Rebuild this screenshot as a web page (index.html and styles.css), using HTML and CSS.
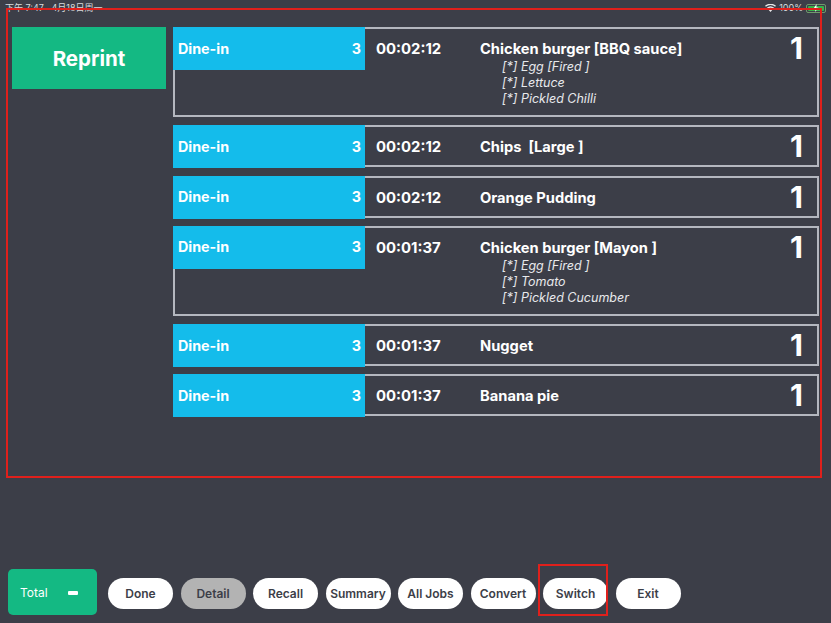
FILE: index.html
```html
<!DOCTYPE html>
<html lang="en">
<head>
<meta charset="utf-8">
<title>Kitchen display</title>
<link rel="stylesheet" href="styles.css">
</head>
<body>
<div class="page">
  <header class="status">
    <span class="status-time">下午 7:47&nbsp;&nbsp;&nbsp;4月18日周一</span>
    <span class="status-right">
      <svg class="wifi" width="11" height="8" viewBox="0 0 11 8"><path d="M5.5 8 3.8 6a2.6 2.6 0 0 1 3.4 0zM2.8 4.9l-1-1.1a5.6 5.6 0 0 1 7.4 0l-1 1.1a4.2 4.2 0 0 0-5.4 0zM.9 2.8 0 1.8a8.2 8.2 0 0 1 11 0l-.9 1a6.9 6.9 0 0 0-9.2 0z" fill="#e8e8ea"/></svg>
      <span>100%</span>
      <span class="battery"><span class="battery-fill"><svg class="bolt" width="6" height="8" viewBox="0 0 6 8"><path d="M3.6 0 .6 4.4h2L2.2 8l3.2-4.6h-2z" fill="#fff"/></svg></span></span>
    </span>
  </header>
  <main class="main">
    <aside class="side"><button class="reprint">Reprint</button></aside>
    <section class="list">
      <article class="card card-tall">
        <div class="tag"><span>Dine-in</span><span class="tag-n">3</span></div>
        <div class="time">00:02:12</div>
        <div class="item"><div class="name">Chicken burger [BBQ sauce]</div><div class="mod">[*] Egg [Fired ]</div><div class="mod">[*] Lettuce</div><div class="mod">[*] Pickled Chilli</div></div>
        <div class="qty">1</div>
      </article>
      <article class="card">
        <div class="tag"><span>Dine-in</span><span class="tag-n">3</span></div>
        <div class="time">00:02:12</div>
        <div class="item"><div class="name">Chips&nbsp; [Large ]</div></div>
        <div class="qty">1</div>
      </article>
      <article class="card">
        <div class="tag"><span>Dine-in</span><span class="tag-n">3</span></div>
        <div class="time">00:02:12</div>
        <div class="item"><div class="name">Orange Pudding</div></div>
        <div class="qty">1</div>
      </article>
      <article class="card card-tall">
        <div class="tag"><span>Dine-in</span><span class="tag-n">3</span></div>
        <div class="time">00:01:37</div>
        <div class="item"><div class="name">Chicken burger [Mayon ]</div><div class="mod">[*] Egg [Fired ]</div><div class="mod">[*] Tomato</div><div class="mod">[*] Pickled Cucumber</div></div>
        <div class="qty">1</div>
      </article>
      <article class="card">
        <div class="tag"><span>Dine-in</span><span class="tag-n">3</span></div>
        <div class="time">00:01:37</div>
        <div class="item"><div class="name">Nugget</div></div>
        <div class="qty">1</div>
      </article>
      <article class="card">
        <div class="tag"><span>Dine-in</span><span class="tag-n">3</span></div>
        <div class="time">00:01:37</div>
        <div class="item"><div class="name">Banana pie</div></div>
        <div class="qty">1</div>
      </article>
    </section>
  </main>
  <footer class="footer">
    <div class="total"><span>Total</span><span class="total-dash"></span></div>
    <nav class="actions">
      <button class="pill">Done</button>
      <button class="pill pill-active">Detail</button>
      <button class="pill">Recall</button>
      <button class="pill">Summary</button>
      <button class="pill">All Jobs</button>
      <button class="pill">Convert</button>
      <button class="pill pill-marked">Switch</button>
      <button class="pill">Exit</button>
    </nav>
  </footer>
  <div class="mark-main"></div>
</div>
</body>
</html>
```
FILE: styles.css
```css
*, *::before, *::after { box-sizing: border-box; }
html, body { margin: 0; height: 100%; }
body {
  background: #3c3e48;
  color: #fff;
  font-family: Inter, "Noto Sans CJK SC", sans-serif;
  overflow: hidden;
}
.page { position: relative; width: 831px; height: 623px; display: flex; flex-direction: column; }

.status {
  height: 27px;
  padding: 2px 5px 0 5px;
  display: flex;
  justify-content: space-between;
  align-items: flex-start;
  font-size: 9px;
  line-height: 12px;
  color: #d9dadd;
  flex: none;
}
.status-right { display: flex; align-items: center; gap: 3px; }
.battery {
  width: 20px; height: 9px;
  border: 1px solid #6f9a6c;
  border-radius: 2px;
  padding: 1px;
  display: flex;
}
.battery-fill {
  flex: 1;
  background: #38b34a;
  border-radius: 1px;
  display: flex;
  justify-content: center;
  align-items: center;
  overflow: visible;
}
.bolt { flex: none; }

.main { display: flex; flex: 1; min-height: 0; padding-left: 12px; }
.side { width: 161px; flex: none; }
.reprint {
  display: block;
  width: 154px; height: 62px;
  border: 0;
  padding: 1px 0 0;
  background: #14b983;
  color: #fff;
  font: 700 20.5px/60px Inter, sans-serif;
}
.list { width: 646px; display: flex; flex-direction: column; gap: 8.3px; }

.card {
  display: flex;
  height: 42px;
  border: 2px solid #b4b7bf;
  border-left: 0;
  position: relative;
  flex: none;
}
.card-tall { height: 90px; border-left: 2px solid #b4b7bf; }
.tag {
  width: 192px; height: 43px;
  margin: -2px 0 0 0;
  padding: 0 4px 1px 5px;
  background: #14bceb;
  display: flex;
  justify-content: space-between;
  align-items: center;
  font-size: 14.3px;
  font-weight: 700;
  flex: none;
}
.card-tall .tag { margin-left: -2px; }
.time {
  width: 115px;
  padding: 11px 0 0 11px;
  font-size: 14.9px;
  line-height: 18px;
  font-weight: 700;
  flex: none;
}
.item { flex: 1; padding-top: 11px; }
.name { font-size: 14.7px; line-height: 19px; font-weight: 700; }
.mod {
  margin-left: 22px;
  font-size: 12.5px;
  line-height: 16px;
  font-style: italic;
  color: #e8e9ec;
}
.qty {
  width: 27px;
  padding-top: 1px;
  font-size: 30px;
  line-height: 36px;
  font-weight: 700;
  flex: none;
}

.footer {
  height: 54px;
  margin-bottom: 8px;
  padding-left: 8px;
  display: flex;
  align-items: flex-end;
  flex: none;
}
.total {
  width: 89px; height: 46px;
  padding: 0 19px 0 12px;
  background: #14b983;
  border-radius: 5px;
  display: flex;
  justify-content: space-between;
  align-items: center;
  font-size: 12px;
}
.total-dash { width: 10px; height: 4px; background: #fff; border-radius: 1px; margin-top: 2px; }
.actions { display: flex; gap: 7.5px; margin: 0 0 6px 11px; }
.pill {
  width: 65px; height: 31px;
  padding: 0;
  border: 0;
  border-radius: 16px;
  background: #fff;
  color: #3c3e48;
  font: 600 12px/31px Inter, sans-serif;
  white-space: nowrap;
}
.pill-active { background: #b3b3b3; }
.pill-marked { position: relative; }
.pill-marked::after {
  content: "";
  position: absolute;
  left: -5px; top: -14px;
  width: 70px; height: 52px;
  border: 2px solid #e0201c;
}
.mark-main {
  position: absolute;
  left: 6px; top: 8px;
  width: 816px; height: 470px;
  border: 2px solid #e0201c;
  pointer-events: none;
}
```
